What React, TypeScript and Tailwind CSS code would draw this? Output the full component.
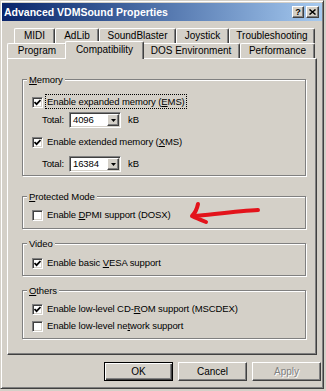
import React from 'react';

const raised =
  'bg-[#d4d0c8] border border-t-white border-l-white border-r-[#404040] border-b-[#404040] shadow-[inset_-1px_-1px_0_#808080]';

const Check: React.FC<{ checked?: boolean }> = ({ checked }) => (
  <div className="w-[11px] h-[11px] shrink-0 bg-white border border-t-[#808080] border-l-[#808080] border-r-white border-b-white shadow-[inset_1px_1px_0_#404040,inset_-1px_-1px_0_#d4d0c8] flex items-center justify-center">
    {checked && (
      <svg width="7" height="7" viewBox="0 0 7 7">
        <path d="M0.5 3 L2.6 5.2 L6.5 1" fill="none" stroke="#000" strokeWidth="1.7" />
      </svg>
    )}
  </div>
);

const CheckRow: React.FC<{ checked?: boolean; mt: string; children: React.ReactNode }> = ({
  checked,
  mt,
  children,
}) => (
  <div className={`flex items-center h-[16px] pl-[9px] ${mt}`}>
    <Check checked={checked} />
    <span className="ml-[4px] whitespace-nowrap">{children}</span>
  </div>
);

const Combo: React.FC<{ value: string; mt: string }> = ({ value, mt }) => (
  <div className={`flex items-center h-[16px] pl-[19px] ${mt}`}>
    <span className="w-[27px]">Total:</span>
    <div className="w-[52px] h-[16px] bg-white border border-t-[#808080] border-l-[#808080] border-r-white border-b-white shadow-[inset_1px_1px_0_#404040,inset_-1px_-1px_0_#d4d0c8] flex items-stretch p-[1px]">
      <span className="flex-1 pl-[2px] leading-[12px]">{value}</span>
      <div className={`w-[12px] ${raised} flex items-center justify-center`}>
        <svg width="5" height="3" viewBox="0 0 5 3">
          <path d="M0 0 H5 L2.5 3 Z" fill="#000" />
        </svg>
      </div>
    </div>
    <span className="ml-[7px]">kB</span>
  </div>
);

const Group: React.FC<{ label: React.ReactNode; h: string; mt: string; children: React.ReactNode }> = ({
  label,
  h,
  mt,
  children,
}) => (
  <div
    className={`w-[284px] ${h} ${mt} ml-[14px] border border-[#808080] shadow-[inset_1px_1px_0_#fff,1px_1px_0_#fff]`}
  >
    <div className="-mt-[7px] ml-[4px] px-[2px] w-fit h-[13px] leading-[13px] bg-[#d4d0c8]">{label}</div>
    {children}
  </div>
);

const Tab: React.FC<{ w: string; children: React.ReactNode }> = ({ w, children }) => (
  <div
    className={`${w} h-[15px] border-t border-l border-t-white border-l-white border-r border-r-[#404040] shadow-[inset_-1px_0_0_#808080] rounded-t-[2px] flex items-center justify-center whitespace-nowrap`}
  >
    {children}
  </div>
);

const Button: React.FC<{ children: React.ReactNode; def?: boolean; disabled?: boolean }> = ({
  children,
  def,
  disabled,
}) => (
  <div
    className={`w-[69px] h-[19px] flex items-center justify-center ${
      def
        ? 'bg-[#d4d0c8] border border-black shadow-[inset_1px_1px_0_#fff,inset_-1px_-1px_0_#404040,inset_-2px_-2px_0_#808080]'
        : raised
    } ${disabled ? 'text-[#808080] [text-shadow:1px_1px_0_#fff]' : ''}`}
  >
    {children}
  </div>
);

export default function App() {
  return (
    <div className="relative w-[326px] h-[391px] bg-[#d4d0c8] font-['Liberation_Sans',Arial,sans-serif] text-[10px] text-black leading-none">
      <div className="w-[324px] h-[389px] border border-t-[#d4d0c8] border-l-[#d4d0c8] border-r-[#404040] border-b-[#404040] shadow-[inset_1px_1px_0_#fff,inset_-1px_-1px_0_#808080] pt-[2px] px-[1px] flex flex-col">
        {/* title bar */}
        <div className="h-[18px] bg-gradient-to-r from-[#0a246a] to-[#a6caf0] flex items-center justify-between pl-[2px] pr-[3px]">
          <span className="text-white font-bold text-[10.5px]">Advanced VDMSound Properties</span>
          <div className="flex gap-[2px]">
            <div className={`w-[12px] h-[12px] ${raised} flex items-center justify-center font-bold text-[9px]`}>?</div>
            <div className={`w-[13px] h-[12px] ${raised} flex items-center justify-center`}>
              <svg width="7" height="6" viewBox="0 0 7 6">
                <path d="M0.5 0.5 L6.5 5.5 M6.5 0.5 L0.5 5.5" stroke="#000" strokeWidth="1.5" />
              </svg>
            </div>
          </div>
        </div>

        {/* tabs */}
        <div className="mt-[7px] ml-[12px] flex">
          <Tab w="w-[41px]">MIDI</Tab>
          <Tab w="w-[44px]">AdLib</Tab>
          <Tab w="w-[77px]">SoundBlaster</Tab>
          <Tab w="w-[53px]">Joystick</Tab>
          <Tab w="w-[86px]">Troubleshooting</Tab>
        </div>
        <div className="ml-[5px] flex items-end h-[15px]">
          <Tab w="w-[60px]">Program</Tab>
          <div className="relative z-10 w-[79px] h-[18px] -mx-[2px] -mb-[1px] bg-[#d4d0c8] border-t border-l border-t-white border-l-white border-r border-r-[#404040] shadow-[inset_-1px_0_0_#808080] rounded-t-[2px] flex items-center justify-center pb-[2px]">
            Compatibility
          </div>
          <Tab w="w-[98px]">DOS Environment</Tab>
          <Tab w="w-[75px]">Performance</Tab>
        </div>

        {/* panel */}
        <div className="ml-[5px] w-[310px] h-[297px] border border-t-white border-l-white border-r-[#404040] border-b-[#404040] shadow-[inset_-1px_-1px_0_#808080] flex flex-col text-[9.5px] tracking-[-0.1px]">
          <Group label={<><u>M</u>emory</>} h="h-[97px]" mt="mt-[20px]">
            <CheckRow checked mt="mt-[8px]">
              <span className="outline outline-1 outline-dotted outline-black outline-offset-[1px]">
                Enable expanded memory (<u>E</u>MS)
              </span>
            </CheckRow>
            <Combo value="4096" mt="mt-[2px]" />
            <CheckRow checked mt="mt-[6px]">
              Enable extended memory (<u>X</u>MS)
            </CheckRow>
            <Combo value="16384" mt="mt-[6px]" />
          </Group>
          <Group label={<><u>P</u>rotected Mode</>} h="h-[33px]" mt="mt-[20px]">
            <CheckRow mt="mt-[4px]">
              Enable <u>D</u>PMI support (DOSX)
            </CheckRow>
          </Group>
          <Group label="Video" h="h-[33px]" mt="mt-[14px]">
            <CheckRow checked mt="mt-[5px]">
              Enable basic <u>V</u>ESA support
            </CheckRow>
          </Group>
          <Group label={<><u>O</u>thers</>} h="h-[49px]" mt="mt-[14px]">
            <CheckRow checked mt="mt-[4px]">
              Enable low-level CD-<u>R</u>OM support (MSCDEX)
            </CheckRow>
            <CheckRow mt="mt-[1px]">
              Enable low-level ne<u>t</u>work support
            </CheckRow>
          </Group>
        </div>

        {/* buttons */}
        <div className="mt-[7px] ml-[102px] flex gap-[5px]">
          <Button def>OK</Button>
          <Button>Cancel</Button>
          <Button disabled>Apply</Button>
        </div>
      </div>

      {/* red annotation arrow */}
      <svg className="absolute left-0 top-0 pointer-events-none" width="326" height="391" viewBox="0 0 326 391">
        <path
          d="M258 210 C 240 211, 215 214, 194 216 M198 204 C 197 209, 195 213, 192 216 C 196 218, 201 220, 206 222"
          fill="none"
          stroke="#e3131b"
          strokeWidth="4"
          strokeLinecap="round"
          strokeLinejoin="round"
        />
      </svg>
    </div>
  );
}
